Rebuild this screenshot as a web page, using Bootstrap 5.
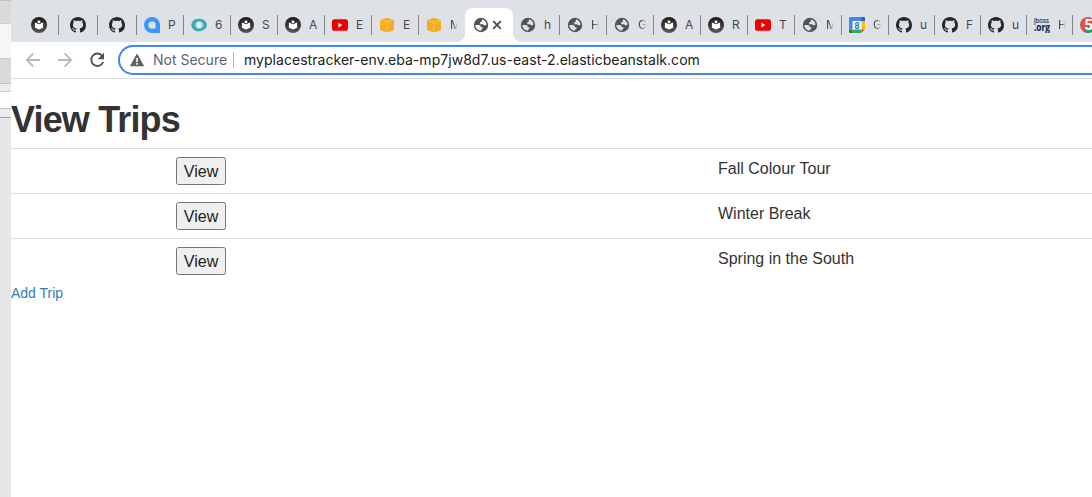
<!DOCTYPE html>
<html lang="en">
<head>
<meta charset="utf-8">
<title>View Trips</title>
<link rel="stylesheet" href="https://cdn.jsdelivr.net/npm/bootstrap@5.3.0/dist/css/bootstrap.min.css">
<style>
body{width:1092px;height:497px;overflow:hidden;background:#fff;color:#333;font-family:"Liberation Sans",Arial,sans-serif}
.behind{width:11px;background:#e6e6e6}
.behind div{flex:none}
.b1{height:24px;background:#dadada;border-top:1px solid #c4c4c4;border-bottom:1px solid #cecece}
.b2{height:34px;background:#f6f6f6}
.b3{height:26px;background:#dadada;border-top:1px solid #c8c8c8;border-bottom:1px solid #c2c2c2}
.b4{height:8px;background:#ebebeb;border-bottom:1px solid #d2d2d2}
.b5{height:17px;background:#fdfdfd;border-bottom:1px solid #bcbcbc}
.b6{height:9px;background:#ededed;border-bottom:1px solid #a4a4a4}
.strip{height:42px;background:#dee1e6;padding-top:8px}
.tab{flex:none;width:47px;height:34px;padding-left:7px;position:relative;font:12px Inter,sans-serif;color:#45484c}
.tab svg{flex:none;width:16px;height:16px}
.tab:not(.on):not(.nosep)::after{content:"";position:absolute;right:0;top:7px;width:1px;height:20px;background:#85888d}
.tab span{width:8px;margin-left:8px;overflow:hidden;white-space:nowrap;line-height:16px}
.tab .fade-end{-webkit-mask-image:linear-gradient(90deg,#000 40%,transparent);mask-image:linear-gradient(90deg,#000 40%,transparent)}
.pin{width:39px;padding-left:11px}
.pin.first{width:48px;padding-left:20px}
.narrow{width:46px}
.on{width:48px;background:#fff;border-radius:8px 8px 0 0;padding-left:8px}
.on::before,.on::after{content:"";position:absolute;bottom:0;width:8px;height:8px}
.on::before{left:-8px;background:radial-gradient(circle at 0 0,transparent 7.5px,#fff 8px)}
.on::after{right:-8px;background:radial-gradient(circle at 100% 0,transparent 7.5px,#fff 8px)}
.bar{height:37px;border-bottom:1px solid #dadce0;padding:3px 0 3px 13px}
.bar>svg{flex:none;width:18px;height:18px;margin-right:14px}
.omni{flex:1;height:30px;border:2px solid #4285f4;border-right:0;border-radius:15px 0 0 15px;margin-left:-2px;padding:0 0 1px 9px;font:14px Inter,sans-serif;color:#202124;white-space:nowrap}
.secure{color:#5f6368;margin-left:8px;width:73px}
.url{letter-spacing:.04px}
.rule{width:1px;height:16px;background:#b5b8bc;margin:0 10px 0 7px}
h1{font-size:36px;font-weight:700;line-height:40px;margin:21px 0 8px;letter-spacing:-.85px}
.trips td{padding:8px;border-top:1px solid #ddd;border-bottom:0;color:#333;font-size:16px;line-height:23px;height:45px}
.trips{table-layout:fixed;width:1081px;margin:0 0 -1px}
.view{width:50px;height:28px;padding:1px 0 0;font-size:16px;line-height:26px;border:1px solid #767676;border-radius:2.5px;background:#efefef;color:#222;display:block;margin-left:157px}
.add{font-size:14px;line-height:20px;color:#337ab7;text-decoration:none;display:block}
</style>
</head>
<body class="d-flex">
<svg width="0" height="0" class="position-absolute">
<defs>
<linearGradient id="gr" x2="0" y2="1"><stop stop-color="#1c1a19"/><stop offset="1" stop-color="#5a5855"/></linearGradient>
<symbol id="book" viewBox="0 0 16 16"><circle cx="8" cy="8" r="8" fill="url(#gr)"/><path d="M3.900 5.600 8 7.100l4.100-1.500v5.100L8 12.600 3.900 10.700z" fill="#fff"/><circle cx="8" cy="4.900" r="1.900" fill="#fff" stroke="#2b2928" stroke-width=".8"/></symbol>
<symbol id="git" viewBox="0 0 16 16"><path fill="#24292e" d="M8 0C3.58 0 0 3.58 0 8c0 3.54 2.29 6.53 5.47 7.59.4.07.55-.17.55-.38 0-.19-.01-.82-.01-1.49-2.01.37-2.53-.49-2.69-.94-.09-.23-.48-.94-.82-1.13-.28-.15-.68-.52-.01-.53.63-.01 1.08.58 1.23.82.72 1.21 1.87.87 2.33.66.07-.52.28-.87.51-1.07-1.78-.2-3.64-.89-3.64-3.95 0-.87.31-1.59.82-2.15-.08-.2-.36-1.02.08-2.12 0 0 .67-.21 2.2.82.64-.18 1.32-.27 2-.27s1.36.09 2 .27c1.53-1.04 2.2-.82 2.2-.82.44 1.1.16 1.92.08 2.12.51.56.82 1.27.82 2.15 0 3.07-1.87 3.75-3.65 3.95.29.25.54.73.54 1.48 0 1.07-.01 1.93-.01 2.2 0 .21.15.46.55.38A8.01 8.01 0 0 0 16 8c0-4.42-3.58-8-8-8"/></symbol>
<symbol id="globe" viewBox="0 0 16 16"><circle cx="8" cy="8" r="7.200" fill="#505358"/><path fill="currentColor" d="M9 2.300c2.500.6 4.400 2.800 4.600 5.300-.7 0-1 .9-1.900.9-1 0-.8-1.300-1.800-1.300H7.200V5.600c0-.8 1.500-.4 1.600-1.300zM2.300 8h3.200c1.500 0 2.300.8 2.300 2.200h1.700v1.900H8.300v1.600C5 13.700 2.400 11.200 2.300 8z"/></symbol>
<symbol id="yt" viewBox="0 0 16 16"><rect y="2.300" width="16" height="11.500" rx="2.600" fill="#f00000"/><path d="M6.400 5.700v4.700L10.400 8z" fill="#fff"/></symbol>
<symbol id="cube" viewBox="0 0 16 16"><path d="M8 .8 15 3v10.200L8 15.400 1 13.200V3z" fill="#f3ae25"/><path d="M1 3l7 2 7-2M8 5v10.300" stroke="#f9d288" stroke-width=".5" fill="none"/></symbol>
<symbol id="drop" viewBox="0 0 16 16"><path d="M8 0a8 8 0 0 1 8 8v8H8A8 8 0 0 1 8 0z" fill="#3b95fb"/><circle cx="8" cy="8" r="3.700" fill="#dee1e6"/><path d="m9.500 9.500 2 2" stroke="#dee1e6" stroke-width="1.400"/></symbol>
<symbol id="ring" viewBox="0 0 16 16"><path d="M2 4C4 1.500 10 .8 13.500 3.500 16.500 6 16.500 10 13.500 12.300 10 15 5 15 2 12-.5 9.500 0 6.200 2 4z" fill="#3aa5b0"/><ellipse cx="8.200" cy="8" rx="4.700" ry="4" fill="#80cbd0"/><ellipse cx="8.200" cy="8" rx="2.700" ry="2.900" fill="#dff0f0"/></symbol>
<symbol id="cal" viewBox="0 0 16 16"><rect width="16" height="16" rx="1" fill="#fff"/><path d="M1 0h14a1 1 0 0 1 1 1v3H3.500v8.500H0V1a1 1 0 0 1 1-1z" fill="#4285f4"/><path d="M12.500 4H16v8.500h-3.500z" fill="#fbbc04"/><path d="M12.500 0H15a1 1 0 0 1 1 1v3h-3.500z" fill="#1967d2"/><path d="M3.500 12.500h9V16h-9z" fill="#34a853"/><path d="M0 12.500h3.500V16H1a1 1 0 0 1-1-1z" fill="#188038"/><path d="M12.500 12.500H16L12.500 16z" fill="#ea4335"/><path d="M16 12.500V16h-3.500z" fill="#dee1e6"/><text x="8" y="11.600" text-anchor="middle" font-family="Roboto" font-weight="700" font-size="9.500" fill="#2878dc">8</text></symbol>
<symbol id="jb" viewBox="0 0 16 16"><text x="0" y="6" font-family="Open Sans" font-size="7.500" fill="#22304a" stroke="#22304a" stroke-width=".2" textLength="15" lengthAdjust="spacingAndGlyphs">jboss</text><text x="0" y="13.800" font-family="Open Sans" font-weight="700" font-size="10" fill="#16294a" stroke="#16294a" stroke-width=".2" textLength="16" lengthAdjust="spacingAndGlyphs">.org</text></symbol>
<symbol id="five" viewBox="0 0 16 16"><circle cx="8" cy="8" r="8" fill="#dc524a"/><path d="M16 8a8 8 0 0 1-12.500 6.600L10 8z" fill="#25a162"/><text x="8.500" y="13.300" text-anchor="middle" font-family="Roboto" font-weight="700" font-size="15" fill="#fff">5</text></symbol>
</defs>
</svg>
<aside class="behind d-flex flex-column flex-shrink-0"><div class="b1"></div><div class="b2"></div><div class="b3"></div><div class="b4"></div><div class="b5"></div><div class="b6"></div></aside>
<div class="flex-grow-1 overflow-hidden">
<nav class="strip d-flex overflow-hidden">
<div class="tab pin first d-flex align-items-center"><svg><use href="#book"/></svg></div>
<div class="tab pin d-flex align-items-center"><svg><use href="#git"/></svg></div>
<div class="tab pin d-flex align-items-center"><svg><use href="#git"/></svg></div>
<div class="tab d-flex align-items-center"><svg><use href="#drop"/></svg><span>P</span></div>
<div class="tab d-flex align-items-center"><svg><use href="#ring"/></svg><span>6</span></div>
<div class="tab d-flex align-items-center"><svg><use href="#book"/></svg><span>S</span></div>
<div class="tab d-flex align-items-center"><svg><use href="#book"/></svg><span>A</span></div>
<div class="tab d-flex align-items-center"><svg><use href="#yt"/></svg><span>E</span></div>
<div class="tab d-flex align-items-center"><svg><use href="#cube"/></svg><span>E</span></div>
<div class="tab nosep d-flex align-items-center" style="width:46px"><svg><use href="#cube"/></svg><span class="fade-end">M</span></div>
<div class="tab on d-flex align-items-center"><svg style="color:#fff"><use href="#globe"/></svg><svg style="width:10px;height:10px;margin-left:3px" viewBox="0 0 10 10"><path d="m1.200 1.200 7.600 7.600m0-7.600-7.600 7.600" stroke="#45484c" stroke-width="1.700"/></svg></div>
<div class="tab d-flex align-items-center"><svg style="color:#dee1e6"><use href="#globe"/></svg><span>h</span></div>
<div class="tab d-flex align-items-center"><svg style="color:#dee1e6"><use href="#globe"/></svg><span class="fade-end">H</span></div>
<div class="tab d-flex align-items-center"><svg style="color:#dee1e6"><use href="#globe"/></svg><span class="fade-end">G</span></div>
<div class="tab d-flex align-items-center"><svg><use href="#book"/></svg><span>A</span></div>
<div class="tab d-flex align-items-center"><svg><use href="#book"/></svg><span>R</span></div>
<div class="tab d-flex align-items-center"><svg><use href="#yt"/></svg><span>T</span></div>
<div class="tab d-flex align-items-center"><svg style="color:#dee1e6"><use href="#globe"/></svg><span class="fade-end">M</span></div>
<div class="tab d-flex align-items-center"><svg><use href="#cal"/></svg><span class="fade-end">G</span></div>
<div class="tab narrow d-flex align-items-center"><svg><use href="#git"/></svg><span>u</span></div>
<div class="tab narrow d-flex align-items-center"><svg><use href="#git"/></svg><span>F</span></div>
<div class="tab narrow d-flex align-items-center"><svg><use href="#git"/></svg><span>u</span></div>
<div class="tab narrow d-flex align-items-center"><svg><use href="#jb"/></svg><span class="fade-end">H</span></div>
<div class="tab narrow d-flex align-items-center"><svg><use href="#five"/></svg></div>
</nav>
<div class="bar d-flex align-items-center">
<svg viewBox="0 0 18 18" fill="none" stroke="#b8babd" stroke-width="1.800"><path d="M16 9H3.500M9.300 2.500 2.800 9l6.500 6.500"/></svg>
<svg viewBox="0 0 18 18" fill="none" stroke="#b8babd" stroke-width="1.800"><path d="M2 9h12.500M8.700 2.500 15.200 9l-6.500 6.500"/></svg>
<svg viewBox="0 0 18 18"><path d="M14.300 4.900A6.200 6.200 0 1 0 15.200 11" fill="none" stroke="#505357" stroke-width="1.900"/><path d="M16 1.800v6.400H9.600z" fill="#505357"/></svg>
<div class="omni d-flex align-items-center">
<svg width="16" height="16" viewBox="0 0 16 16" class="flex-shrink-0"><path d="M8 1.500 15.200 14.300H.8z" fill="#5f6368"/><path d="M8 6v4M8 11v1.700" stroke="#fff" stroke-width="1.600"/></svg>
<span class="secure">Not Secure</span><span class="rule"></span><span class="url">myplacestracker-env.eba-mp7jw8d7.us-east-2.elasticbeanstalk.com</span>
</div>
</div>
<main>
<h1>View Trips</h1>
<table class="table trips">
<colgroup><col style="width:699px"><col></colgroup>
<tbody>
<tr><td><button class="btn view">View</button></td><td>Fall Colour Tour</td></tr>
<tr><td><button class="btn view">View</button></td><td>Winter Break</td></tr>
<tr><td><button class="btn view">View</button></td><td>Spring in the South</td></tr>
</tbody>
</table>
<a class="add" href="#">Add Trip</a>
</main>
</div>
<script src="https://cdn.jsdelivr.net/npm/bootstrap@5.3.0/dist/js/bootstrap.bundle.min.js"></script>
</body>
</html>
